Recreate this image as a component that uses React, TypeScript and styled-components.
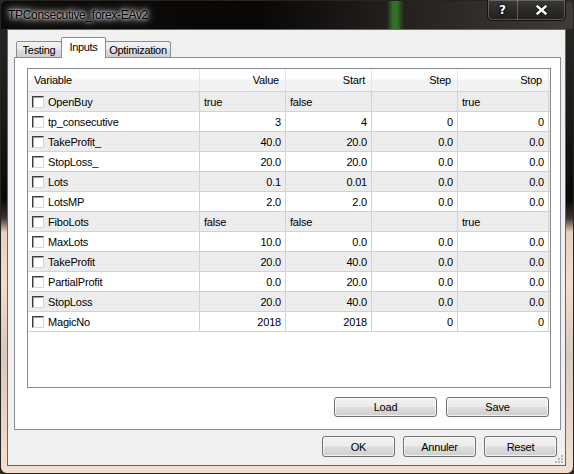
import React from "react";
import styled, { createGlobalStyle } from "styled-components";

const GlobalStyle = createGlobalStyle`
  html, body {
    margin: 0;
    padding: 0;
  }
  body {
    width: 574px;
    height: 474px;
    overflow: hidden;
    background: #2b2825;
    font-family: "Liberation Sans", Arial, sans-serif;
    font-size: 11px;
    color: #000;
  }
`;

const Window = styled.div`
  box-sizing: border-box;
  width: 574px;
  height: 474px;
  display: flex;
  flex-direction: column;
  padding: 0 7px 7px 6px;
  border: 1px solid #262422;
  border-radius: 7px;
  background:
    linear-gradient(90deg, transparent 386px, rgba(52, 135, 40, 0.8) 392px, rgba(52, 135, 40, 0.8) 396px, transparent 403px) top / 100% 28px no-repeat,
    linear-gradient(90deg, #0c0b0a 0%, #090807 45%, #1f1c1a 65%, #3e3b38 100%) top / 100% 28px no-repeat,
    linear-gradient(180deg, #2a2824 0%, #1c1a18 25%, #080707 42%, #3a3431 46%, #e8d0be 49%, #f4dccb 60%, #d9c8bc 75%, #f5dfd0 100%);
`;

const TitleBar = styled.div`
  height: 28px;
  display: flex;
  align-items: flex-start;
  flex-shrink: 0;
`;

const TitleText = styled.div`
  align-self: center;
  padding-left: 1px;
  font-family: "Liberation Sans", Arial, sans-serif;
  font-size: 12px;
  letter-spacing: -0.3px;
  color: #000;
  text-shadow:
    0 0 3px rgba(255, 255, 255, 0.95),
    0 0 6px rgba(255, 255, 255, 0.85),
    0 0 10px rgba(255, 255, 255, 0.7),
    0 0 16px rgba(255, 255, 255, 0.5);
`;

const Caption = styled.div`
  margin-left: auto;
  margin-top: -1px;
  display: flex;
  height: 20px;
  border: 1px solid #141312;
  border-top: none;
  border-radius: 0 0 5px 5px;
  overflow: hidden;
  background: linear-gradient(180deg, #3c3a37 0%, #2a2826 60%, #232120 100%);
  box-shadow: inset 0 0 0 1px rgba(255, 255, 255, 0.22);
`;

const CaptionButton = styled.div<{ $w: number }>`
  width: ${(p) => p.$w}px;
  display: flex;
  align-items: center;
  justify-content: center;
  color: #fff;
  font-family: "DejaVu Sans", sans-serif;
  font-weight: bold;
  font-size: 12px;
  text-shadow: 0 0 2px #000, 0 0 3px #000;
  & + & {
    border-left: 1px solid rgba(255, 255, 255, 0.25);
  }
`;

const Client = styled.div`
  position: relative;
  flex: 1;
  display: flex;
  flex-direction: column;
  background: #f0f0f0;
  border: 1px solid #6a6763;
  padding: 7px 4px 8px 6px;
`;

const TabStrip = styled.div`
  display: flex;
  align-items: flex-end;
  height: 21px;
  padding-left: 2px;
  margin-bottom: -1px;
  position: relative;
  z-index: 1;
`;

const Tab = styled.div<{ $active?: boolean; $w: number }>`
  box-sizing: border-box;
  width: ${(p) => p.$w}px;
  height: ${(p) => (p.$active ? 21 : 17)}px;
  display: flex;
  align-items: center;
  justify-content: center;
  border: 1px solid #898c95;
  border-bottom: ${(p) => (p.$active ? "none" : "1px solid #898c95")};
  border-radius: 2px 2px 0 0;
  background: ${(p) =>
    p.$active
      ? "#ffffff"
      : "linear-gradient(180deg, #f2f2f2 0%, #ebebeb 45%, #dddddd 55%, #cfcfcf 100%)"};
  font-size: 11px;
  letter-spacing: -0.3px;
  padding-bottom: ${(p) => (p.$active ? 2 : 0)}px;
  & + & {
    margin-left: -1px;
  }
`;

const Panel = styled.div`
  box-sizing: border-box;
  height: 373px;
  display: flex;
  flex-direction: column;
  gap: 9px;
  border: 1px solid #898c95;
  background: #fff;
  padding: 10px 9px 12px 12px;
`;

const List = styled.div`
  box-sizing: border-box;
  height: 320px;
  border: 1px solid #828790;
  background: #fff;
  overflow: hidden;
`;

const COLUMNS = "172px 86px 86px 86px 91px";

const HeaderRow = styled.div`
  display: grid;
  grid-template-columns: ${COLUMNS};
  height: 23px;
  box-sizing: border-box;
  border-bottom: 1px solid #d5d5d5;
  background: linear-gradient(180deg, #ffffff 0%, #ffffff 45%, #f4f4f4 50%, #f1f2f3 100%);
`;

const HeaderCell = styled.div<{ $right?: boolean }>`
  display: flex;
  align-items: center;
  justify-content: ${(p) => (p.$right ? "flex-end" : "flex-start")};
  padding: 0 6px 1px 6px;
  border-right: 1px solid #e3e4e6;
  letter-spacing: -0.2px;
`;

const Row = styled.div<{ $alt: boolean }>`
  display: grid;
  grid-template-columns: ${COLUMNS};
  height: 20px;
  box-sizing: border-box;
  border-bottom: 1px solid #d2d2d2;
  background: ${(p) => (p.$alt ? "#ededed" : "#ffffff")};
`;

const Cell = styled.div<{ $right?: boolean }>`
  display: flex;
  align-items: center;
  justify-content: ${(p) => (p.$right ? "flex-end" : "flex-start")};
  padding: 0 4px;
  border-right: 1px solid #d2d2d2;
  letter-spacing: -0.2px;
  white-space: nowrap;
`;

const Check = styled.span`
  box-sizing: border-box;
  width: 12px;
  height: 12px;
  margin-right: 4px;
  background: #fff;
  border: 1px solid;
  border-color: #3c3c3c #d6d6d6 #d6d6d6 #3c3c3c;
  box-shadow: inset 1px 1px 0 #a0a0a0;
`;

const ButtonRow = styled.div`
  display: flex;
  justify-content: flex-end;
  gap: 9px;
  padding-right: 2px;
`;

const Button = styled.button<{ $w: number; $h: number }>`
  box-sizing: border-box;
  width: ${(p) => p.$w}px;
  height: ${(p) => p.$h}px;
  padding: 0;
  border: 1px solid #707070;
  border-radius: 3px;
  background: linear-gradient(180deg, #f2f2f2 0%, #ebebeb 48%, #dddddd 52%, #cfcfcf 100%);
  box-shadow: inset 0 0 0 1px rgba(255, 255, 255, 0.7);
  font-family: "Liberation Sans", Arial, sans-serif;
  font-size: 11px;
  letter-spacing: -0.2px;
  color: #000;
`;

const BottomBar = styled.div`
  margin-top: 6px;
  display: flex;
  justify-content: flex-end;
  gap: 8px;
  padding-right: 4px;
`;

const Grip = styled.svg`
  position: absolute;
  right: 1px;
  bottom: 1px;
`;

type Param = {
  name: string;
  value: string;
  start: string;
  step: string;
  stop: string;
  bool?: boolean;
};

const params: Param[] = [
  { name: "OpenBuy", value: "true", start: "false", step: "", stop: "true", bool: true },
  { name: "tp_consecutive", value: "3", start: "4", step: "0", stop: "0" },
  { name: "TakeProfit_", value: "40.0", start: "20.0", step: "0.0", stop: "0.0" },
  { name: "StopLoss_", value: "20.0", start: "20.0", step: "0.0", stop: "0.0" },
  { name: "Lots", value: "0.1", start: "0.01", step: "0.0", stop: "0.0" },
  { name: "LotsMP", value: "2.0", start: "2.0", step: "0.0", stop: "0.0" },
  { name: "FiboLots", value: "false", start: "false", step: "", stop: "true", bool: true },
  { name: "MaxLots", value: "10.0", start: "0.0", step: "0.0", stop: "0.0" },
  { name: "TakeProfit", value: "20.0", start: "40.0", step: "0.0", stop: "0.0" },
  { name: "PartialProfit", value: "0.0", start: "20.0", step: "0.0", stop: "0.0" },
  { name: "StopLoss", value: "20.0", start: "40.0", step: "0.0", stop: "0.0" },
  { name: "MagicNo", value: "2018", start: "2018", step: "0", stop: "0" },
];

export default function App() {
  return (
    <>
      <GlobalStyle />
      <Window>
        <TitleBar>
          <TitleText>TPConsecutive_forex-EAv2</TitleText>
          <Caption>
            <CaptionButton $w={29}>?</CaptionButton>
            <CaptionButton $w={47}>
              <svg width="11" height="10" viewBox="0 0 11 10">
                <path d="M1.5 1.5 L9.5 8.5 M9.5 1.5 L1.5 8.5" stroke="#000" strokeWidth="4" strokeLinecap="square" opacity="0.6" />
                <path d="M1.5 1.5 L9.5 8.5 M9.5 1.5 L1.5 8.5" stroke="#fff" strokeWidth="2.4" strokeLinecap="square" />
              </svg>
            </CaptionButton>
          </Caption>
        </TitleBar>
        <Client>
          <TabStrip>
            <Tab $w={46}>Testing</Tab>
            <Tab $w={45} $active>
              Inputs
            </Tab>
            <Tab $w={66}>Optimization</Tab>
          </TabStrip>
          <Panel>
            <List>
              <HeaderRow>
                <HeaderCell>Variable</HeaderCell>
                <HeaderCell $right>Value</HeaderCell>
                <HeaderCell $right>Start</HeaderCell>
                <HeaderCell $right>Step</HeaderCell>
                <HeaderCell $right>Stop</HeaderCell>
              </HeaderRow>
              {params.map((p, i) => (
                <Row key={p.name} $alt={i % 2 === 0}>
                  <Cell>
                    <Check />
                    {p.name}
                  </Cell>
                  <Cell $right={!p.bool}>{p.value}</Cell>
                  <Cell $right={!p.bool}>{p.start}</Cell>
                  <Cell $right={!p.bool}>{p.step}</Cell>
                  <Cell $right={!p.bool}>{p.stop}</Cell>
                </Row>
              ))}
            </List>
            <ButtonRow>
              <Button $w={103} $h={20}>Load</Button>
              <Button $w={103} $h={20}>Save</Button>
            </ButtonRow>
          </Panel>
          <BottomBar>
            <Button $w={73} $h={21}>OK</Button>
            <Button $w={73} $h={21}>Annuler</Button>
            <Button $w={73} $h={21}>Reset</Button>
          </BottomBar>
          <Grip width="9" height="9" viewBox="0 0 9 9">
            <g fill="#b8b8b8">
              <rect x="6" y="0" width="2" height="2" />
              <rect x="6" y="3" width="2" height="2" />
              <rect x="3" y="3" width="2" height="2" />
              <rect x="6" y="6" width="2" height="2" />
              <rect x="3" y="6" width="2" height="2" />
              <rect x="0" y="6" width="2" height="2" />
            </g>
          </Grip>
        </Client>
      </Window>
    </>
  );
}
